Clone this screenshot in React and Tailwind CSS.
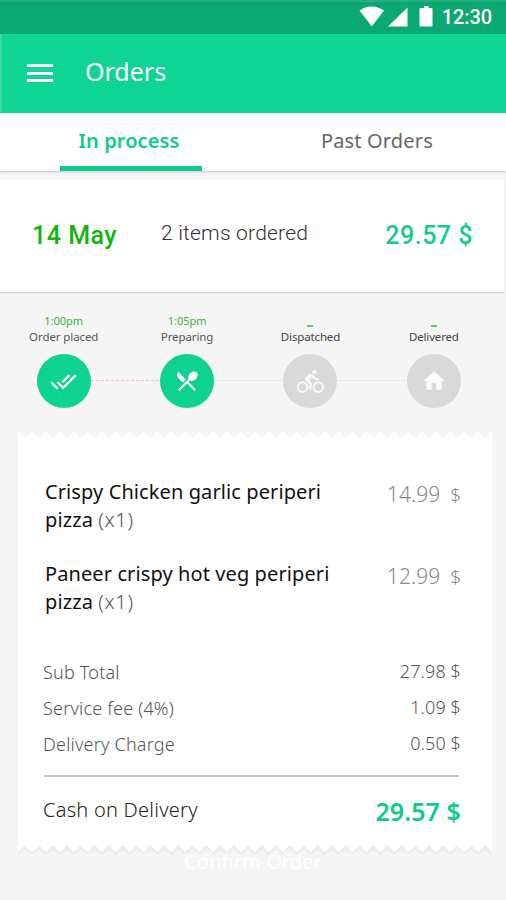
import { MdDirectionsBike, MdDoneAll, MdHome, MdRestaurantMenu } from "react-icons/md";
import clsx from "clsx";

const steps = [
  { time: "1:00pm", label: "Order placed", icon: MdDoneAll, size: "h-[27px] w-[27px]", done: true },
  { time: "1:05pm", label: "Preparing", icon: MdRestaurantMenu, size: "h-[26px] w-[26px]", done: true },
  { time: "", label: "Dispatched", icon: MdDirectionsBike, size: "h-[27px] w-[27px]", done: false },
  { time: "", label: "Delivered", icon: MdHome, size: "h-[26px] w-[26px]", done: false },
];

const items = [
  { name: "Crispy Chicken garlic periperi", price: "14.99" },
  { name: "Paneer crispy hot veg periperi", price: "12.99" },
];

const fees = [
  { label: "Sub Total", amount: "27.98 $" },
  { label: "Service fee (4%)", amount: "1.09 $" },
  { label: "Delivery Charge", amount: "0.50 $" },
];

// Torn paper edge, 34 teeth over the width of the receipt
function zigzag(outer, inner) {
  let d = `M0 ${outer}`;
  for (let i = 0; i < 34; i++) {
    d += ` L${i * 13.94 + 7} ${inner} L${(i + 1) * 13.94} ${outer}`;
  }
  return d;
}

function StatusBar() {
  return (
    <div className="flex h-[34px] items-center justify-end border-t-2 border-[#22b07f] bg-[#0aa872] pr-[14px] pb-0.5 text-white">
      <svg className="h-[34px] w-[75px]" viewBox="0 0 75 34" fill="currentColor">
        <path d="M0.5 10.5 Q12.5 2.5 25 10.5 L12.8 26.5 Z" />
        <path d="M48.5 7.5 V26.5 H29 Z" />
        <path d="M65 6 h4.500 v2 h3 q1 0 1 1 V25.500 q0 1 -1 1 h-11 q-1 0 -1 -1 V9 q0 -1 1 -1 h3.500 z" />
      </svg>
      <span className="ml-[8px] font-[Roboto] text-[20px] font-medium tracking-[-0.1px]">12:30</span>
    </div>
  );
}

function Step({ step }) {
  const Icon = step.icon;
  return (
    <div className="flex w-[123.400px] flex-col items-center">
      <span className="flex h-[17px] justify-center text-[11px] leading-[17px] text-[#35b535]">
        {step.time || <i className="mt-[13px] h-[1.500px] w-[6px] bg-[#5ecb6c]" />}
      </span>
      <span
        className={clsx(
          "h-[17px] leading-[16px]",
          step.done ? "text-[11.500px] tracking-[-0.1px] text-[#555]" : "text-[11.500px] tracking-[-0.15px] text-[#444]"
        )}
      >
        {step.label}
      </span>
      <div
        className={clsx(
          "relative mt-[8px] flex h-[54px] w-[54px] items-center justify-center rounded-full",
          step.done ? "bg-[#0ed290] text-white" : "bg-[#d9d9d9] text-[#fafafa]"
        )}
      >
        <Icon className={step.size} />
      </div>
    </div>
  );
}

export default function App() {
  return (
    <div className="h-[900px] w-[506px] overflow-hidden bg-[#f5f5f5] font-['Noto_Sans',sans-serif]">
      <StatusBar />
      <header className="flex h-[79px] items-center border-l-2 border-[#3fd6a4] bg-[#0ed494] pb-1 pl-[25px] text-white">
        <div className="mt-[3px] flex h-[18px] w-[26px] flex-col justify-between">
          <div className="h-[3px] bg-white" />
          <div className="h-[3px] bg-white" />
          <div className="h-[3px] bg-white" />
        </div>
        <h1 className="ml-[32px] text-[25px]">Orders</h1>
      </header>

      <nav className="flex h-[58px] bg-white shadow-[0_1px_2px_rgba(0,0,0,0.2)]">
        <div className="ml-[60px] w-[142px] border-b-[5px] border-[#0ccd8a] pt-[13px] pr-1 text-center text-[20px] font-semibold tracking-[0.1px] text-[#0ccd8a]">
          In process
        </div>
        <div className="ml-[119px] pt-[13px] text-[20px] tracking-[0.15px] text-[#666]">Past Orders</div>
      </nav>

      <section className="mt-[9px] flex h-[112px] w-[504px] items-center bg-white pr-[31px] pl-8 font-[Roboto] shadow-[0_1px_1px_rgba(0,0,0,0.14)]">
        <span className="w-[129px] text-[25px] font-medium tracking-[0.5px] text-[#10b510]">14 May</span>
        <span className="pb-[4px] text-[21px] font-light tracking-[0.2px] text-[#333]">2 items ordered</span>
        <span className="ml-auto text-[25px] font-medium tracking-[0.5px] text-[#14cb8a]">29.57 $</span>
      </section>

      <section className="relative mt-[20px] flex h-[119px] pl-[2px]">
        <div className="absolute top-[68px] left-[91px] w-[68px] border-t border-dashed border-[#f7c4c4]" />
        <div className="absolute top-[68px] left-[214px] w-[192px] border-t border-[#e9e9e9]" />
        {steps.map((step) => (
          <Step key={step.label} step={step} />
        ))}
      </section>

      <section className="ml-[18px] w-[474px]">
        <svg className="block h-[9px] w-[474px]" viewBox="0 0 474 9">
          <path d={zigzag(0, 8) + " V9 H0 Z"} fill="#fff" />
        </svg>
        <div className="h-[405px] bg-white pt-[38px] pr-[31px] pl-[25px]">
          {items.map((item) => (
            <div key={item.name} className="flex h-[82px] justify-between pl-0.5 text-[20px] leading-[28px]">
              <p className="tracking-[0.1px] whitespace-nowrap text-[#111]">
                {item.name}
                <br />
                pizza <span className="font-light tracking-[0.7px] text-[#555]">(x1)</span>
              </p>
              <span className="pt-[2px] text-[21px] font-light text-[#888]">
                {item.price}
                <span className="ml-[10px] text-[19px]">$</span>
              </span>
            </div>
          ))}
          <div className="h-[15px]" />
          {fees.map((fee) => (
            <div
              key={fee.label}
              className="flex h-[36px] justify-between text-[18px] leading-[28px] font-light text-[#555]"
            >
              <span className="pt-px tracking-[0.2px]">{fee.label}</span>
              <span className="tracking-[0.1px]">{fee.amount}</span>
            </div>
          ))}
          <div className="mt-[10px] mr-0.5 ml-px h-[2px] bg-[#c4c4c4]" />
          <div className="mt-[15px] flex h-9 items-center justify-between">
            <span className="pb-px text-[20px] font-light tracking-[0.25px] text-[#222]">Cash on Delivery</span>
            <span className="pt-1 text-[25px] font-semibold tracking-[0.1px] text-[#0ccd8a]">29.57 $</span>
          </div>
        </div>
        <svg className="block h-[12px] w-[474px]" viewBox="0 0 474 12">
          <path d={zigzag(10, 5) + " V0 H0 Z"} fill="#ededed" />
          <path d={zigzag(7, 0) + " V0 H0 Z"} fill="#fff" />
        </svg>
      </section>
      <p className="relative -mt-[5px] text-center text-[20px] leading-[20px] tracking-[0.1px] text-white">Confirm Order</p>
    </div>
  );
}
